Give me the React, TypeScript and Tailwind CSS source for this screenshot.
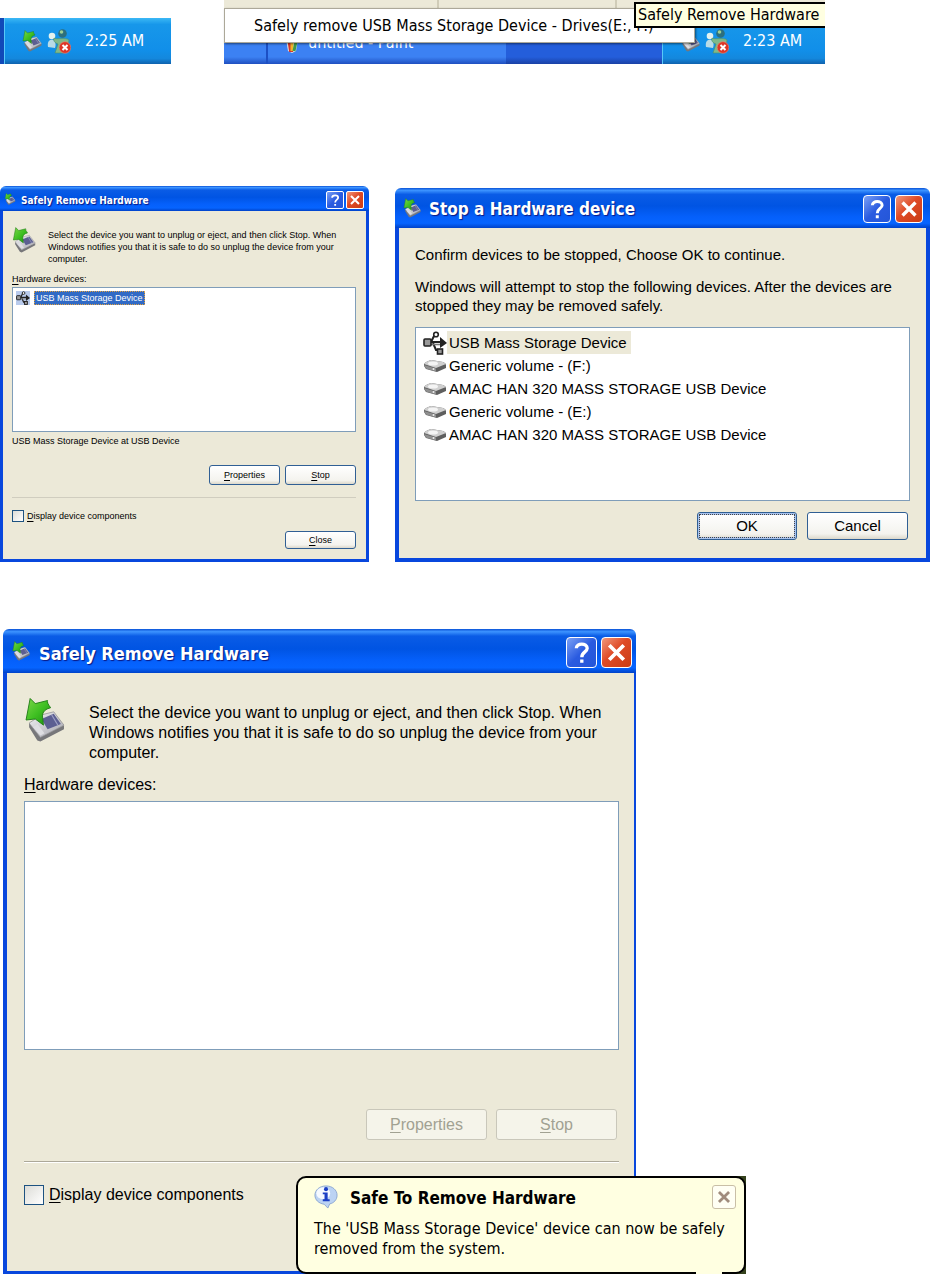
import React, { useId } from "react";

const ui = "font-['Liberation_Sans',Arial,sans-serif]";
const tahoma = "font-['DejaVu_Sans_Condensed','DejaVu_Sans',sans-serif]";

function EjectIcon({ className }: { className: string }) {
  const id = useId();
  return (
    <svg viewBox="0 0 40 44" className={className} aria-hidden="true">
      <defs>
        <linearGradient id={`${id}a`} x1="0" y1="0" x2="1" y2="1">
          <stop offset="0" stopColor="#7ed64a" />
          <stop offset=".5" stopColor="#3fc022" />
          <stop offset="1" stopColor="#178a10" />
        </linearGradient>
        <linearGradient id={`${id}b`} x1="0" y1="0" x2="1" y2="1">
          <stop offset="0" stopColor="#f4f4f6" />
          <stop offset="1" stopColor="#a4a4ac" />
        </linearGradient>
      </defs>
      <path d="M5 25 L16 38 L39 27 L39 31 L16 43 L13 42 L5 29Z" fill="#77777a" />
      <path d="M5 25 L17 17 L29 14 L39 27 L16 39Z" fill={`url(#${id}b)`} stroke="#8c8c90" strokeWidth=".7" />
      <path d="M17 21 L29 16 L36 26 L23 31Z" fill="#5c5f92" />
      <path d="M27 17 L33 27" stroke="#9ea1c6" strokeWidth="1" />
      <path d="M9 29 L16 37 L20 35 L13 26Z" fill="#dedee2" />
      <path d="M6 1 L11 6 L23 3 Q22 5 26 10 Q18 12 18 18 L19 27 L11 21 L2 22Z" fill={`url(#${id}a)`} stroke="#207d16" strokeWidth=".9" strokeLinejoin="round" />
    </svg>
  );
}

function MessengerIcon() {
  return (
    <svg viewBox="0 0 24 26" className="h-[26px] w-6 shrink-0" aria-hidden="true">
      <circle cx="5" cy="8" r="3.3" fill="#e4f2ee" />
      <path d="M1 19 C0 13 3 11 6 12 C9 12 9 18 8 20Z" fill="#b9dbe6" />
      <path d="M7 10 C9 12 19 9 22 12 C22 17 18 15 17 17 L17 25 H8 L11 16 C8 15 6 13 7 10Z" fill="#7fb98a" stroke="#4a8e68" strokeWidth=".6" />
      <circle cx="15.500" cy="5.500" r="4.300" fill="#2c6f7d" />
      <circle cx="14.500" cy="4" r="1.800" fill="#9ccf96" />
      <circle cx="18" cy="19.500" r="5.800" fill="#dd3526" stroke="#f0836f" strokeWidth=".6" />
      <path d="M15.500 17 L20.500 22 M20.500 17 L15.500 22" stroke="#fff" strokeWidth="2" />
    </svg>
  );
}

function UsbIcon({ className }: { className: string }) {
  return (
    <svg viewBox="0 0 24 24" className={className} fill="none" stroke="#222" strokeWidth="2" aria-hidden="true">
      <path d="M7 11 H18 M8 11 L11 5 H12 M10 12 L13 19 H15" />
      <path d="M8 13.500 H17" stroke="#777" strokeWidth="1.600" />
      <rect x="1" y="8" width="7" height="7" rx="1" fill="#999" strokeWidth="1.600" />
      <path d="M17 6 L24 12 L17 17Z" fill="#222" stroke="none" />
      <circle cx="13" cy="3.500" r="2.300" fill="#fff" strokeWidth="1.600" />
      <rect x="14.500" y="18" width="5" height="5" fill="#999" strokeWidth="1.600" />
    </svg>
  );
}

function DriveIcon() {
  return (
    <svg viewBox="0 0 24 16" className="h-4 w-6 shrink-0" aria-hidden="true">
      <path d="M1 6 Q2 4 8 2 L20 4 Q23 5 23 7 V10 L14 14 L3 11 L1 8Z" fill="#5e5e5e" />
      <path d="M1 6 Q2 4 8 2 L20 4 L23 6 L13 10Z" fill="#cfcfcf" />
      <path d="M1 7 L13 10.600 V13.500 L3 10.600Z" fill="#8f8f8f" />
      <ellipse cx="10" cy="5.400" rx="5" ry="2" fill="#f4f4f4" />
      <circle cx="10.500" cy="11" r="1" fill="#eee" />
    </svg>
  );
}

function InfoIcon() {
  return (
    <svg viewBox="0 0 26 26" className="h-6 w-6 shrink-0" aria-hidden="true">
      <path d="M13 1 C20 1 25 5.500 25 11 C25 16 21.500 19.500 17 20.500 L15 25 L11 20.800 C5 20 1 16 1 11 C1 5.500 6 1 13 1Z" fill="#bcd3f3" stroke="#8ba6cf" strokeWidth="1" />
      <ellipse cx="10" cy="9" rx="7.500" ry="6.500" fill="#f5f9ff" />
      <circle cx="13" cy="4.500" r="2.200" fill="#1b3fc4" />
      <path d="M9.500 8 H14.800 V15.500 H17 V17.500 H9.500 V15.500 H11.400 V10 H9.500Z" fill="#1b3fc4" />
    </svg>
  );
}

type Size = "sm" | "md" | "lg";

const bar = {
  sm: "h-[25px] pl-1 pr-[5px] gap-[5px]",
  md: "h-10 pl-2 pr-[7px] gap-2",
  lg: "h-11 pl-2 pr-1 gap-2",
};
const heading = { sm: "text-[10px] pt-[3px]", md: "text-[17px] pt-1", lg: "text-[18px] pt-1" };
const barIcon = { sm: "h-3 w-3", md: "h-5 w-[18px]", lg: "h-5 w-5" };
const caption = { sm: "h-[18px] w-[18px] rounded-[2px]", md: "h-7 w-7 rounded-[4px]", lg: "h-[31px] w-[31px] rounded-[4px]" };
const captionGap = { sm: "gap-[2px]", md: "gap-1", lg: "gap-1" };
const frame = {
  sm: "border-[3px] border-t-0",
  md: "border-4 border-t-0",
  lg: "border-l-4 border-r-2 border-b-[3px]",
};

function Dialog({ title, size, className, children }: { title: string; size: Size; className: string; children: React.ReactNode }) {
  return (
    <section aria-label={title} className={`flex flex-col ${className}`}>
      <header className={`flex items-center rounded-t-[6px] bg-[linear-gradient(#0a52d6_0%,#3c93ff_6%,#0a5ce6_16%,#0054e3_45%,#0560fb_72%,#0664ff_88%,#0042c8_100%)] ${bar[size]}`}>
        <EjectIcon className={`shrink-0 ${barIcon[size]}`} />
        <h2 className={`${tahoma} ${heading[size]} grow whitespace-nowrap font-bold text-white [text-shadow:1px_1px_1px_#0a1883]`}>{title}</h2>
        <div className={`flex pt-[2px] ${captionGap[size]}`}>
          <button type="button" aria-label="Help" className={`border border-white bg-[linear-gradient(135deg,#7ba1f5,#2a5be0_50%,#2456d8)] text-white ${caption[size]}`}>
            <svg viewBox="0 0 28 28" className="h-full w-full" fill="none" stroke="currentColor" strokeWidth="3.200">
              <path d="M9 10 C9 4.500 19.500 4.500 19.500 10 C19.500 13.500 14.300 13.500 14.300 18.500 M14.300 20.800 V24" />
            </svg>
          </button>
          <button type="button" aria-label="Close window" className={`border border-white bg-[linear-gradient(135deg,#f0987c,#df4a26_45%,#c93c15)] text-white ${caption[size]}`}>
            <svg viewBox="0 0 28 28" className="h-full w-full" fill="none" stroke="currentColor" strokeWidth="3.600">
              <path d="M7 7 L21 21 M21 7 L7 21" />
            </svg>
          </button>
        </div>
      </header>
      <div className={`${ui} flex grow flex-col border-[#0847dd] bg-[#ece9d8] text-black ${frame[size]}`}>{children}</div>
    </section>
  );
}

function Key({ text }: { text: string }) {
  return (
    <>
      <span className="underline underline-offset-2">{text[0]}</span>
      {text.slice(1)}
    </>
  );
}

const xpButton = "rounded-[3px] border border-[#305f94] bg-[linear-gradient(#ffffff,#f4f3ee_80%,#dcd8cb)]";
const box = "appearance-none shrink-0 border border-[#1d5281] bg-[linear-gradient(135deg,#dcdcd7,#ffffff)]";

function Tray({ time }: { time: string }) {
  return (
    <div className={`${tahoma} flex h-full items-center gap-1 border-l border-[#58c8f8] bg-[linear-gradient(#3bb8f5_0%,#1797ea_14%,#118fe9_70%,#1488dd_88%,#0f62ae_100%)] pl-4 text-base text-white`}>
      <EjectIcon className="h-[22px] w-[22px] shrink-0" />
      <MessengerIcon />
      <span className="pl-[10px] whitespace-nowrap">{time}</span>
    </div>
  );
}

const volumes = [
  "Generic volume - (F:)",
  "AMAC HAN 320 MASS STORAGE USB Device",
  "Generic volume - (E:)",
  "AMAC HAN 320 MASS STORAGE USB Device",
];

export default function App() {
  return (
    <main className="bg-white">
      <div className="flex h-16 items-end">
        <div className="h-[46px] w-[171px] shrink-0 bg-[#1149b8] pl-1">
          <Tray time="2:25 AM" />
        </div>
        <div className="relative ml-[53px] flex h-full w-[601px] flex-col">
          <div className="flex h-[17px] shrink-0 bg-[#ece9d8]">
            <span className="w-[215px] border-r-2 border-[#d0ccb8]" />
            <span className="w-[178px] border-r-2 border-[#d0ccb8]" />
          </div>
          <div className="flex grow bg-[linear-gradient(#3a80f2,#245edb_30%,#245edb_85%,#1941a5)]">
            <div className="w-[42px] bg-[linear-gradient(#3c81f3_85%,#1f4fc0)]" />
            <div className={`${tahoma} flex w-[240px] items-center gap-2 border-l-2 border-[#1c4fc4] bg-[linear-gradient(#3c81f3_85%,#1f4fc0)] pt-1 pl-4 text-base text-white`}>
              <svg viewBox="0 0 16 20" className="h-5 w-4" aria-hidden="true">
                <path d="M2 6 H14 L12 18 L8 20 L4 18Z" fill="#dfe6ea" />
                <path d="M4 4 L8 18 L6 18Z" fill="#d8362a" stroke="#d8362a" strokeWidth="2" />
                <path d="M8 2 V18" stroke="#f0b52c" strokeWidth="3" />
                <path d="M13 4 L10 18" stroke="#3c9a4a" strokeWidth="3" />
              </svg>
              <span className="whitespace-nowrap">untitled - Paint</span>
            </div>
            <div className="grow" />
            <div className="w-[163px]">
              <Tray time="2:23 AM" />
            </div>
          </div>
          <button type="button" className={`${tahoma} absolute left-0 top-2 flex h-[35px] w-[471px] items-center whitespace-nowrap border border-[#aca899] bg-white pl-[29px] text-base text-black shadow-[1px_1px_2px_#00000080]`}>
            Safely remove USB Mass Storage Device - Drives(E:, F:)
          </button>
          <div role="tooltip" className={`${tahoma} absolute right-0 top-[2px] flex h-[26px] w-[191px] items-center whitespace-nowrap border-2 border-r-0 border-black bg-[#ffffe1] pl-[2px] text-base text-black`}>
            Safely Remove Hardware
          </div>
        </div>
      </div>

      <div className="mt-[122px] grid grid-cols-[minmax(0,369fr)_minmax(0,535fr)] gap-[26px]">
        <Dialog title="Safely Remove Hardware" size="sm" className="h-[376px]">
          <div className="flex grow flex-col pl-[9px] pr-[10px] pt-4 pb-[10px] text-[9px] leading-3">
            <div className="flex gap-3">
              <EjectIcon className="h-[26px] w-6 shrink-0" />
              <p className="whitespace-nowrap pt-[2px]">
                Select the device you want to unplug or eject, and then click Stop. When
                <br />
                Windows notifies you that it is safe to do so unplug the device from your
                <br />
                computer.
              </p>
            </div>
            <h3 className="pt-2">
              <Key text="Hardware devices:" />
            </h3>
            <ul className="mt-[2px] h-[145px] border border-[#7f9db9] bg-white p-[3px]">
              <li className="flex items-center gap-1">
                <UsbIcon className="h-[14px] w-[14px] bg-[#b9cbec]" />
                <span className="border border-dotted border-[#e0a040] bg-[#316ac5] px-px text-white">USB Mass Storage Device</span>
              </li>
            </ul>
            <p className="pt-[3px]">USB Mass Storage Device at USB Device</p>
            <div className="mt-[18px] flex justify-end gap-[5px]">
              <button type="button" className={`${xpButton} h-5 w-[71px]`}><Key text="Properties" /></button>
              <button type="button" className={`${xpButton} h-5 w-[71px]`}><Key text="Stop" /></button>
            </div>
            <hr className="mt-3 border-[#d0cdbf]" />
            <label className="mt-3 flex items-center gap-[3px]">
              <input type="checkbox" className={`${box} h-3 w-3`} />
              <span><Key text="Display device components" /></span>
            </label>
            <div className="mt-auto flex justify-end">
              <button type="button" className={`${xpButton} h-[18px] w-[71px]`}><Key text="Close" /></button>
            </div>
          </div>
        </Dialog>

        <Dialog title="Stop a Hardware device" size="md" className="mt-[2px] h-[374px]">
          <div className="flex grow flex-col px-4 pt-[17px] pb-[18px] text-[15px] leading-5">
            <p className="whitespace-nowrap">Confirm devices to be stopped, Choose OK to continue.</p>
            <p className="whitespace-nowrap pt-3 leading-[19px]">
              Windows will attempt to stop the following devices. After the devices are
              <br />
              stopped they may be removed safely.
            </p>
            <ul className="mt-3 h-[174px] border border-[#7f9db9] bg-white py-[3px] pl-[7px]">
              <li className="flex h-[23px] items-center">
                <UsbIcon className="h-6 w-6 shrink-0" />
                <span className="bg-[#ece9d8] pl-[2px] pr-1 leading-[23px]">USB Mass Storage Device</span>
              </li>
              {volumes.map((v, i) => (
                <li key={i} className="flex h-[23px] items-center gap-[2px] whitespace-nowrap">
                  <DriveIcon />
                  {v}
                </li>
              ))}
            </ul>
            <div className="mt-auto flex justify-end gap-[10px] pr-[2px]">
              <button type="button" className={`${xpButton} h-7 w-[100px] p-px shadow-[inset_0_0_0_2px_#a9c3ee]`}>
                <span className="flex h-full items-center justify-center border border-dotted border-[#444]">OK</span>
              </button>
              <button type="button" className={`${xpButton} h-7 w-[101px]`}>Cancel</button>
            </div>
          </div>
        </Dialog>
      </div>

      <div className="relative ml-[3px] mt-[67px] max-w-[743px]">
        <Dialog title="Safely Remove Hardware" size="lg" className="h-[645px] max-w-[633px]">
          <div className="flex grow flex-col pl-[17px] pr-[15px] pt-6 text-base leading-5">
            <div className="flex gap-6">
              <EjectIcon className="h-[46px] w-[41px] shrink-0" />
              <p className="whitespace-nowrap pt-[6px]">
                Select the device you want to unplug or eject, and then click Stop. When
                <br />
                Windows notifies you that it is safe to do so unplug the device from your
                <br />
                computer.
              </p>
            </div>
            <h3 className="pt-3"><Key text="Hardware devices:" /></h3>
            <div className="mt-[6px] h-[249px] border border-[#7f9db9] bg-white" />
            <div className="mt-[59px] flex justify-end gap-[9px] pr-[2px]">
              <button type="button" disabled className="h-[31px] w-[121px] rounded-[3px] border border-[#c9c7ba] bg-[#f5f4ea] text-[#a1a192]"><Key text="Properties" /></button>
              <button type="button" disabled className="h-[31px] w-[121px] rounded-[3px] border border-[#c9c7ba] bg-[#f5f4ea] text-[#a1a192]"><Key text="Stop" /></button>
            </div>
            <hr className="mt-[21px] border-t border-b border-t-[#aca899] border-b-white" />
            <label className="mt-[22px] flex items-center gap-[5px]">
              <input type="checkbox" className={`${box} h-5 w-5`} />
              <span><Key text="Display device components" /></span>
            </label>
          </div>
        </Dialog>
        <aside className="absolute bottom-0 right-0 w-[450px] bg-[linear-gradient(to_right,transparent_97%,#34421c_97%)]">
          <div className={`${tahoma} relative h-[98px] rounded-[10px] border-2 border-black bg-[#ffffe1] pl-4 pr-2 pt-[7px] text-base leading-5 text-black`}>
            <div className="flex items-start">
              <InfoIcon />
              <h2 className="grow pl-3 pt-[3px] text-[17px] leading-5 font-bold whitespace-nowrap">Safe To Remove Hardware</h2>
              <button type="button" aria-label="Dismiss" className="h-6 w-6 rounded-[3px] border border-[#c9bfa6] bg-[#fffff4] text-[#a08c7c]">
                <svg viewBox="0 0 24 24" className="h-full w-full" fill="none" stroke="currentColor" strokeWidth="3"><path d="M6.500 6.500 L17.500 17.500 M17.500 6.500 L6.500 17.500" /></svg>
              </button>
            </div>
            <p className="whitespace-nowrap pt-[10px]">
              The 'USB Mass Storage Device' device can now be safely
              <br />
              removed from the system.
            </p>
            <span className="absolute -bottom-[2px] right-[22px] h-[2px] w-[26px] bg-[#ffffe1]" />
          </div>
        </aside>
      </div>
    </main>
  );
}
